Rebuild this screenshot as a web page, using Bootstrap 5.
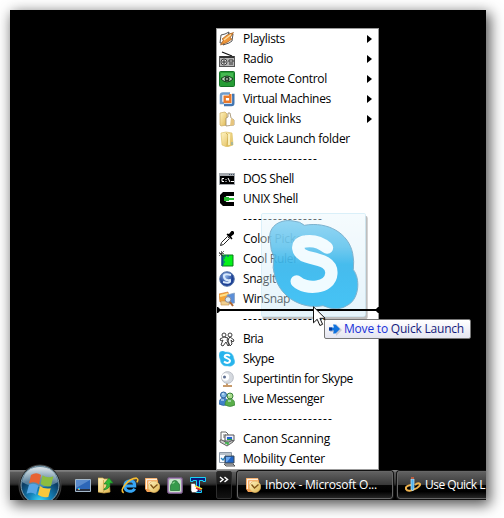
<!DOCTYPE html>
<html lang="en">
<head>
<meta charset="utf-8">
<title>Quick Launch</title>
<link href="https://cdn.jsdelivr.net/npm/bootstrap@5.3.0/dist/css/bootstrap.min.css" rel="stylesheet">
<style>
body{background:#fff;width:504px;height:518px;font:12px/20px "Open Sans","Noto Sans",sans-serif;color:#000}
svg{display:block;flex:none}
.desk{width:476px;height:490px;margin:10px 0 0 10px;background:#000;box-shadow:3px 4px 13px 1px rgba(0,0,0,.68)}
.desk-clip{width:476px;height:490px}
.quick{left:206px;top:18px;width:163px;height:442px;background:#fff;border:1px solid #9b9b9b}
.quick-row{height:20px;padding-left:2px}
.quick-row .ico{width:16px;height:16px;margin-right:8px}
.tri{border:4px solid transparent;border-left:5px solid #000;border-right:0;margin-right:6px}
.taskbar{height:30px;background:linear-gradient(#6e6e6e 0,#8e8e8e 1px,#5c5c5c 2px,#525252 5px,#353535 13px,#202020 15px,#020202 16px,#000 100%);color:#fff}
.tray{width:206px;padding-left:61.5px}
.tray-cell{width:23px}
.chev{width:16px;height:28px;background:linear-gradient(#292929,#1a1a1a 45%,#000 50%,#131313);border:1px solid #2d2d2d;border-radius:2px;margin:1px 5px 0 0}
.task{height:28px;margin-top:1px;border:1px solid #666;border-radius:3px;box-shadow:0 0 0 1px #111;background:linear-gradient(#606060,#3a3a3a 48%,#050505 52%,#000 75%,#252525);padding-left:7px}
.task1{width:156px;margin-right:4px}.task2{width:110px}
.ghost{left:251px;top:203px}
.insert{left:207px;top:295px;z-index:2}
.pointer{left:303px;top:296px;z-index:4}
.drop-tip{left:314px;top:309px;width:147px;height:20px;border:1px solid #767676;border-radius:2px;background:linear-gradient(#fff,#e4e5f0);color:#151c7c;padding-left:3px;z-index:3}
.drop-tip b{font-weight:400;color:#1731d8}
.orb{left:7px;top:454px}
</style>
<script src="https://cdn.jsdelivr.net/npm/bootstrap@5.3.0/dist/js/bootstrap.bundle.min.js"></script>
</head>
<body class="overflow-hidden">
<svg width="0" height="0" class="position-absolute"><defs>
<linearGradient id="gold" x2="1" y2="1"><stop stop-color="#fff5c4"/><stop offset="1" stop-color="#dfb64f"/></linearGradient>
<linearGradient id="sky" x2="0" y2="1"><stop stop-color="#86d1f2"/><stop offset=".3" stop-color="#62c4ee"/><stop offset=".5" stop-color="#2fb4ec"/><stop offset="1" stop-color="#30bdf5"/></linearGradient>
<linearGradient id="glass" x2="0" y2="1"><stop stop-color="#e9f7fd"/><stop offset="1" stop-color="#c5e6f6"/></linearGradient>
<radialGradient id="ball" cx=".4" cy=".3"><stop stop-color="#8fb5e8"/><stop offset="1" stop-color="#1c3f94"/></radialGradient>
<radialGradient id="orbg" cx=".5" cy=".95" r=".85"><stop stop-color="#3ee0ff"/><stop offset=".35" stop-color="#1583ba"/><stop offset=".75" stop-color="#0b3c63"/><stop offset="1" stop-color="#4b7188"/></radialGradient>
<linearGradient id="shine" x2="0" y2="1"><stop stop-color="#fff" stop-opacity=".8"/><stop offset="1" stop-color="#b8d4e2" stop-opacity=".3"/></linearGradient>
<symbol id="outlook" viewBox="0 0 16 16"><path d="M1 1h12l1 3v8l-2 3H3l-2-3z" fill="#f4a052"/><path d="M2.500 12V2.500H13M5 12V5h8" fill="none" stroke="#fff0dc" stroke-width="1.300"/><circle cx="10" cy="9.800" r="5.700" fill="url(#gold)" stroke="#e3b25b" stroke-width=".7"/><path d="M6.500 7.500l3 3.500 4-3.500" fill="none" stroke="#805417" stroke-width="1.300"/></symbol>
</defs></svg>
<main class="desk position-relative">
<div class="desk-clip position-relative overflow-hidden d-flex flex-column justify-content-end">
<div class="quick position-absolute" id="menu">
<div class="quick-row d-flex align-items-center"><svg class="ico" viewBox="0 0 16 16"><path d="M2 4l4-1 4-2-.5 2H14l-1 7-3 2-6 2 .5-2H1z" fill="#fff" stroke="#444" stroke-width=".9"/><path d="M1.500 14l3-5L3 8l5-4 6.500-2.500L11 7l2 1-5 3.500z" fill="#f0973a" stroke="#a35d1e" stroke-width=".7"/><path d="M5 9l7-5.500" stroke="#ffe1a4" stroke-width="1.300"/></svg><span data-w="42">Playlists</span><i class="tri ms-auto"></i></div>
<div class="quick-row d-flex align-items-center"><svg class="ico" viewBox="0 0 16 16"><path d="M3 1l10 4" stroke="#111" stroke-width="1.2"/><rect x=".5" y="5.5" width="15" height="10" fill="#b5b5b5" stroke="#555"/><path d="M1 5h14v2H1z" fill="#333"/><circle cx="5" cy="11" r="3" fill="#ddd" stroke="#444"/><path d="M3 11h4M5 9v4M10 9h4v2h-4zM10 13h4" stroke="#333" fill="#eee"/></svg><span data-w="30">Radio</span><i class="tri ms-auto"></i></div>
<div class="quick-row d-flex align-items-center"><svg class="ico" viewBox="0 0 16 16"><rect x=".5" y=".5" width="15" height="15" rx="1" fill="#269c35" stroke="#157226"/><path d="M2 2h12v4H2z" fill="#45b951"/><path d="M2 8q6-6 12 0-6 6-12 0z" fill="#bcd9bd" stroke="#193b20"/><circle cx="8" cy="8" r="2.5" fill="#203d27"/><circle cx="8" cy="8" r="1" fill="#aaa"/></svg><span data-w="84">Remote Control</span><i class="tri ms-auto"></i></div>
<div class="quick-row d-flex align-items-center"><svg class="ico" viewBox="0 0 16 16"><path d="M11 2.500H4Q2 2.500 2 4.500V12h3" fill="none" stroke="#6f9ccb" stroke-width="2.600"/><path d="M5 14h7.500q1.800 0 1.800-2V4H13" fill="none" stroke="#4376b1" stroke-width="2.400"/><path d="M10.500 5.700H5.700v5h5.600V3" fill="none" stroke="#e8792b" stroke-width="2.400"/></svg><span data-w="88">Virtual Machines</span><i class="tri ms-auto"></i></div>
<div class="quick-row d-flex align-items-center"><svg class="ico" viewBox="0 0 16 16"><path d="M1 2l5-1 2 2v11l-6 1-1-1z" fill="url(#gold)" stroke="#c9a75d" stroke-width=".7"/><path d="M7 7l2-1V2l2 0 1 5 3 2v5l-8 1z" fill="#fff" stroke="#9a8965" stroke-width=".8"/><path d="M12 7l3 2v5l-4 1z" fill="#e6c57e"/></svg><span data-w="58">Quick links</span><i class="tri ms-auto"></i></div>
<div class="quick-row d-flex align-items-center"><svg class="ico" viewBox="0 0 16 16"><path d="M2 2l5-1 6 1 1 12-6 2-5-2z" fill="url(#gold)" stroke="#d8bd5c" stroke-width=".6"/><path d="M7 2l2 2-1 11" fill="none" stroke="#c9aa4a" stroke-width=".8"/><path d="M10 3v11" stroke="#fffbd2" stroke-width="1.5"/><path d="M13 11v3" stroke="#71adc8"/></svg><span data-w="107">Quick Launch folder</span></div>
<div class="quick-row d-flex align-items-center"><span class="ico"></span><span data-w="75">---------------</span></div>
<div class="quick-row d-flex align-items-center"><svg class="ico" viewBox="0 0 16 16"><path d="M0 2h16v12H0z" fill="#a5a9ae"/><path d="M1 5h14v8H1z"/><path d="M10 3.500h1M12 3.500h1M14 3.500h1" stroke="#456"/><path d="M5 7.500H3v3h2M7 8v1m0 1v1M9 7l2 4M12 10.500h3" stroke="#fff" fill="none"/></svg><span data-w="51">DOS Shell</span></div>
<div class="quick-row d-flex align-items-center"><svg class="ico" viewBox="0 0 16 16"><path d="M4 1h11v4H7.500L6 6.500v3L7.500 11H15v4H4l-3-3V4z"/><path d="M5 6h5v1h5v2h-5v1H5z" fill="#27be31"/><path d="M11 5.500V6h4v1M11 10.500V10h4V9" fill="none" stroke="#fff" stroke-width=".8"/></svg><span data-w="55">UNIX Shell</span></div>
<div class="quick-row d-flex align-items-center"><span class="ico"></span><span data-w="80">----------------</span></div>
<div class="quick-row d-flex align-items-center"><svg class="ico" viewBox="0 0 16 16"><path d="M1.500 14.500l1-3 6-6 2 2-6 6z" fill="#fff" stroke="#222"/><path d="M7.500 3.500l5 5 1-1-1.500-2 3-2.500V1l-1-1h-1.500L10 3l-1.500-.5z"/></svg><span data-w="64">Color Picker</span></div>
<div class="quick-row d-flex align-items-center"><svg class="ico" viewBox="0 0 16 16"><path d="M3 4h11v11H3z" fill="#05f21a" stroke="#087b19"/><path d="M3 4v11M3 7h3M3 9h2M3 11h3M3 13h2M6 4v2M9 4v2" stroke="#1832b1"/><path d="M0 1l5 5M5 0L0 5M2.500 0v5M0 2.500h5" stroke="#333" stroke-width=".7"/></svg><span data-w="55">Cool Ruler</span></div>
<div class="quick-row d-flex align-items-center"><svg class="ico" viewBox="0 0 16 16"><circle cx="8" cy="8" r="7.300" fill="url(#ball)" stroke="#5877aa"/><path d="M12 4Q4 2 5 6t6 3q1 4-7 2" fill="none" stroke="#d7e8fb" stroke-width="2"/></svg><span data-w="33">SnagIt</span></div>
<div class="quick-row d-flex align-items-center"><svg class="ico" viewBox="0 0 16 16"><path d="M0 3l9-2 1 8-9 2z" fill="#f5a335" stroke="#d9802c" stroke-width=".7"/><path d="M1 5l8-2" stroke="#ffe18b" stroke-width="2"/><path d="M8 4l7.500-2v10L9 13z" fill="#5c8fd8" stroke="#88a1be" stroke-width=".7"/><path d="M2 10h8v4H2z" fill="#f0cf90" stroke="#c99a5c" stroke-width=".7"/><circle cx="9" cy="8.500" r="2.800" fill="#d8ebf8" stroke="#8e8c98"/><path d="M11 11l3 4" stroke="#b0662e" stroke-width="2"/></svg><span data-w="47">WinSnap</span></div>
<div class="quick-row d-flex align-items-center"><span class="ico"></span><span data-w="85">-----------------</span></div>
<div class="quick-row d-flex align-items-center"><svg class="ico" viewBox="0 0 16 16" fill="#fff" stroke="#3d3d3d"><circle cx="5" cy="4" r="2"/><circle cx="11" cy="4" r="2"/><path d="M5 6L1 8l1 2 2-1-2 5 2 1 3-4 2 4 1-1-2-5 1-2zM11 6l4 3-1 2-2-2 1 4-2 2-2-5 1-3z"/></svg><span data-w="20">Bria</span></div>
<div class="quick-row d-flex align-items-center"><svg class="ico" viewBox="0 0 16 16"><path d="M1 1q3-2 5 0 8-1 9 7 2 4-1 6-2 2-5 1-7 1-8-7Q-1 4 1 1z" fill="#28b4ec" stroke="#63c8ef" stroke-width=".5"/><path d="M11 5Q8 3 6 4.500c-2 3 5 2.500 5 5 0 3-4 3-6 1" fill="none" stroke="#fff" stroke-width="2"/></svg><span data-w="31">Skype</span></div>
<div class="quick-row d-flex align-items-center"><svg class="ico" viewBox="0 0 16 16"><path d="M8 11v3M4 15h9" stroke="#c79a6a" stroke-width="2"/><circle cx="8.500" cy="6.500" r="5.900" fill="#d5d9df" stroke="#b2b7c0" stroke-width=".8"/><circle cx="6.500" cy="6" r="3.700" fill="#fff"/><circle cx="5.500" cy="6" r="1.500" fill="#5d6e91"/></svg><span data-w="110">Supertintin for Skype</span></div>
<div class="quick-row d-flex align-items-center"><svg class="ico" viewBox="0 0 16 16"><circle cx="4.500" cy="4" r="3" fill="#80b6e4" stroke="#285d9c"/><path d="M0 13q0-6 4.500-6T9 13q-4 3-9 0z" fill="#3f80c8" stroke="#285d9c" stroke-width=".7"/><circle cx="11" cy="5" r="3" fill="#aadb8d" stroke="#39823a"/><path d="M6 14q0-6 5-6t5 6q-5 3-10 0z" fill="#5aaf4a" stroke="#39823a" stroke-width=".7"/><path d="M3 3h2M9 4h2M2 9h3M9 10h3" stroke="#e3f6ff"/></svg><span data-w="81">Live Messenger</span></div>
<div class="quick-row d-flex align-items-center"><span class="ico"></span><span data-w="90">------------------</span></div>
<div class="quick-row d-flex align-items-center"><svg class="ico" viewBox="0 0 16 16"><path d="M2 1h5l2 2v7H2z" fill="#fff" stroke="#666"/><path d="M4 4h3M4 6h3" stroke="#777"/><path d="M6 4h9v6H6z" fill="#eef" stroke="#555"/><path d="M8 6h5v2H8z" fill="#2565ce"/><path d="M8 8h5v1H8z" fill="#25a541"/><path d="M1 9h2l5 3 6-3v2l-6 4-7-4z" fill="#ccc" stroke="#444" stroke-width=".8"/><path d="M6 12h3v2" stroke="#35b244" stroke-width="1.500" fill="none"/></svg><span data-w="87">Canon Scanning</span></div>
<div class="quick-row d-flex align-items-center"><svg class="ico" viewBox="0 0 16 16"><path d="M.5 1.500h12v10H.500z" fill="#f8fbff" stroke="#8c98a6"/><path d="M1 2h11v2H1z" fill="#b8c2cb"/><path d="M2 7l2 2 3-4" fill="none" stroke="#2384c4" stroke-width="1.300"/><path d="M6 5h9v7H6z" fill="#2265c5" stroke="#3b4853"/><path d="M7 6l5 0-4 5H7z" fill="#6aa8ef"/><path d="M5 13h9l2 2H7z" fill="#ccd0d6" stroke="#555"/></svg><span data-w="82">Mobility Center</span></div>
</div>
<svg class="insert position-absolute" width="162" height="10" viewBox="0 0 162 10"><path d="M0 4h162v2H0z"/><path d="M0 2h1l2 2v2L1 8H0zM162 2h-1l-2 2v2l2 2h1z"/></svg>
<svg class="ghost position-absolute" width="108" height="107" viewBox="168 -20 324 321">
<path d="M482-12q6 0 6 8V291q0 8-8 8H178q-6 0-6-8H475q7 0 7-7z" fill="#555" opacity=".38"/>
<rect x="169.500" y="-18.500" width="312" height="309" rx="4" fill="url(#glass)" stroke="#a9dcf2" stroke-width="3" opacity=".42"/>
<path d="M196 65C185 25 222-4 264 4Q286 5 298 17C370 4 431 42 443 101Q448 125 445 150C466 177 463 233 432 254Q399 279 354 258C292 270 229 234 211 175Q200 145 207 112Q196 91 196 65z" fill="url(#sky)" stroke="#6fa9c8" stroke-width="3" opacity=".88"/>
<path d="M366 84C346 67 324 62 302 65C268 68 276 103 305 111C344 121 382 126 379 162C376 207 302 212 275 185" fill="none" stroke="#fafeff" stroke-width="37" stroke-linecap="round" opacity=".95"/>
</svg>
<svg class="pointer position-absolute" width="14" height="21" viewBox="0 0 14 21"><path d="M.5.800v16l3.700-3.500 2.700 6.200 2.700-1.200-2.700-6h5.200z" fill="#fff" stroke="#111"/></svg>
<div class="drop-tip position-absolute d-flex align-items-center"><svg width="16" height="14" viewBox="0 0 16 14"><path d="M2 6h6V2l6 6-6 6v-4H2z" fill="#c8c8d4"/><path d="M1 5.500h5L5 2.500h2.500L12 7l-4.500 4.500H5l1-3H1z" fill="#1273dd"/><path d="M1 5.500h3v3H1z" fill="#0a3c9c"/></svg><span data-w="120"><b>Move to</b> Quick Launch</span></div>
<div class="taskbar d-flex align-items-start">
<div class="tray d-flex align-items-center h-100 flex-shrink-0">
<div class="tray-cell d-flex justify-content-center"><svg width="16" height="16" viewBox="0 0 16 16"><path d="M.5 2.500h15v12H.500z" fill="#2d66b8" stroke="#a5b9cb"/><path d="M1 3h14L1 11z" fill="#5a8bcd"/><path d="M1 12h14v2H1z" fill="#2a3140"/><path d="M3 11h2v2H3z" fill="#38c4dc"/><path d="M3 12h1v1H3z" fill="#f8793c"/></svg></div>
<div class="tray-cell d-flex justify-content-center"><svg width="16" height="17" viewBox="0 0 16 17"><path d="M0 1l5 0 1 1h5l1 13-6 1-6-1z" fill="url(#gold)" stroke="#d7ad4c" stroke-width=".7"/><path d="M5.500 3v12" stroke="#c9a24a" stroke-width=".8"/><path d="M6 12q3-1 3-5H6l5-6 4 5h-3q1 5-6 7z" fill="#35b936" stroke="#177d25" stroke-width=".7"/></svg></div>
<div class="tray-cell d-flex justify-content-center"><svg width="19" height="17" viewBox="0 0 18 16"><path d="M14 11Q12.500 13.500 9 13.500 4.500 13 4.500 8.500T9.500 3.500q4.500 0 4.500 5H5" fill="none" stroke="#37a6f4" stroke-width="2.800"/><path d="M3.500 15Q0 13 5 7T15.500 1q2.500 1 .5 4" fill="none" stroke="#f7bd31" stroke-width="1.500"/></svg></div>
<div class="tray-cell d-flex justify-content-center"><svg width="16" height="16"><use href="#outlook"/></svg></div>
<div class="tray-cell d-flex justify-content-center"><svg width="16" height="17" viewBox="0 0 16 17"><rect x=".5" y=".500" width="15" height="16" rx="2" fill="#a889b6" stroke="#6f577e"/><rect x="2" y="2" width="12" height="13" rx="1.500" fill="#c5e6c8"/><path d="M3.500 13.500V9q0-2 1.500-2.500Q5 3.500 8 3.500q2.500 0 3 2.500 1.500.5 1.500 2v5.500z" fill="#369a4b" stroke="#226b33" stroke-width=".7"/><path d="M6 7V5.500L8 5" fill="none" stroke="#8dda92"/></svg></div>
<div class="tray-cell d-flex justify-content-center"><svg width="16" height="17" viewBox="0 0 16 17"><path d="M.5.500h15v4H13V3.500H9.500v10h2v2h-6v-2h1v-10H3v1H.500z" fill="#081a80" stroke="#19d3f5"/><path d="M1 6.500h4l1 3 2 1v3l-2 2H2l-1-2z" fill="#fff" stroke="#444" stroke-width=".6"/><path d="M5 9l7 3" stroke="#f7e338" stroke-width="1.800"/><path d="M6 11l5 2" stroke="#e02b25" stroke-width="1.500"/></svg></div>
</div>
<div class="chev d-flex justify-content-center flex-shrink-0"><svg class="mt-1" width="10" height="8" viewBox="0 0 10 8"><path d="M1 1l3 2.500L1 6M5.500 1l3 2.500-3 2.500" fill="none" stroke="#fff" stroke-width="1.500"/></svg></div>
<div class="task task1 d-flex align-items-center flex-shrink-0"><svg class="me-1" width="16" height="16"><use href="#outlook"/></svg><span data-w="112">Inbox - Microsoft O...</span></div>
<div class="task task2 d-flex align-items-center flex-shrink-0"><svg class="me-1" width="16" height="16" viewBox="0 0 16 16"><path d="M6 8Q0 9 1 12q2 4 11-1 4-3 3-4-2-2-5 1" fill="none" stroke="#efb34e" stroke-width="2"/><path d="M6 2h3v10l-1.500 2L6 12z" fill="#4dafed" stroke="#c1e9ff" stroke-width=".7"/><path d="M6 0h3v2H6z" fill="#ba5e42"/></svg><span data-w="60">Use Quick L</span></div>
</div>
<svg class="orb position-absolute" width="46" height="46" viewBox="0 0 46 46"><circle cx="23" cy="22" r="21" fill="#171b1e" stroke="#555" stroke-width=".7"/><circle cx="23" cy="21" r="19" fill="url(#orbg)" stroke="#83a2b2"/><path d="M5 18Q8 3 23 3t18 15q-8 5-18 5T5 18z" fill="url(#shine)"/><g transform="rotate(6 23 21)"><path d="M13 12q5-4 10-1l-1 9.500q-5-3-10 0z" fill="#e76331"/><path d="M24.500 11q5 3 11 0l-1.500 10q-6 2-10.500-1z" fill="#8bbd40"/><path d="M12 22q5-3 9.500 0l-1.500 9q-4-3-9.500 0z" fill="#55a5e4"/><path d="M23 22q5 3 11 1l-1.500 9q-6 2-10.500-1z" fill="#fac83c"/></g></svg>
</div>
</main>
<script>
document.querySelectorAll('[data-w]').forEach(function(el){
 el.classList.add('text-nowrap');
 el.style.letterSpacing=((+el.dataset.w-el.getBoundingClientRect().width)/el.textContent.length)+'px';
});
</script>
</body>
</html>
